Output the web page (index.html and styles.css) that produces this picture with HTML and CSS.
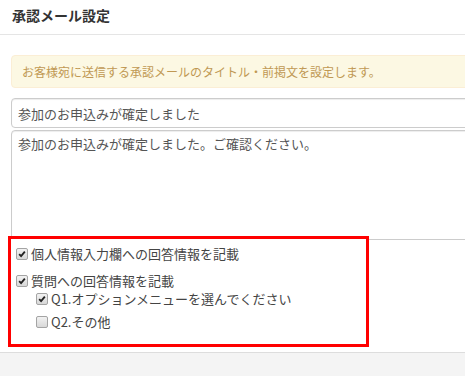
FILE: index.html
```html
<!DOCTYPE html>
<html lang="ja">
<head>
  <meta charset="UTF-8">
  <title>承認メール設定</title>
  <link rel="stylesheet" href="styles.css">
</head>
<body>
  <header class="modal-header">
    <h3>承認メール設定</h3>
  </header>

  <div class="modal-body">
    <div class="alert">お客様宛に送信する承認メールのタイトル・前掲文を設定します。</div>

    <input class="mail-title" type="text" value="参加のお申込みが確定しました">
    <textarea class="mail-body">参加のお申込みが確定しました。ご確認ください。</textarea>

    <div class="options">
      <label class="check-row first">
        <span class="check on"><svg viewBox="0 0 12 12"><path d="M2.6 6.2 L4.9 8.6 L9.4 3.2"/></svg></span>
        個人情報入力欄への回答情報を記載
      </label>
      <label class="check-row second">
        <span class="check on"><svg viewBox="0 0 12 12"><path d="M2.6 6.2 L4.9 8.6 L9.4 3.2"/></svg></span>
        質問への回答情報を記載
      </label>
      <div class="questions">
        <label class="check-row">
          <span class="check on"><svg viewBox="0 0 12 12"><path d="M2.6 6.2 L4.9 8.6 L9.4 3.2"/></svg></span>
          Q1.オプションメニューを選んでください
        </label>
        <label class="check-row">
          <span class="check"></span>
          Q2.その他
        </label>
      </div>
    </div>
  </div>

  <footer class="modal-footer"></footer>
</body>
</html>
```
FILE: styles.css
```css
html, body {
  overflow: hidden;
}
body {
  margin: 0;
  padding: 0;
  width: 465px;
  height: 376px;
  background-color: #fff;
  font-family: "Noto Sans CJK JP", "Liberation Sans", sans-serif;
  color: #333;
}
.modal-header {
  height: 34px;
  padding: 0 12px;
  border-bottom: 1px solid #e5e5e5;
}
.modal-header h3 {
  margin: 0;
  font-size: 14px;
  line-height: 30px;
  font-weight: bold;
  color: #333;
}
.modal-body {
  width: 560px;
  padding: 20px 0 0 11px;
  height: 297px;
}
.alert {
  padding: 7px 10px 6px;
  font-size: 12px;
  line-height: 18px;
  color: #c09853;
  background-color: #fcf8e3;
  border: 1px solid #fbeed5;
  border-radius: 4px;
}
.mail-title,
.mail-body {
  display: block;
  box-sizing: border-box;
  width: 100%;
  margin: 0;
  font-family: inherit;
  font-size: 13px;
  color: #555;
  border: 1px solid #ccc;
  border-radius: 4px;
  box-shadow: inset 0 1px 1px rgba(0, 0, 0, 0.075);
  background-color: #fff;
  outline: none;
}
.mail-title {
  margin-top: 10px;
  height: 30px;
  padding: 0 6px;
}
.mail-body {
  margin-top: 2px;
  height: 110px;
  padding: 4px 6px;
  line-height: 18px;
  resize: none;
}
.options {
  position: relative;
  width: 355px;
  margin: -4px 0 0 -3px;
  padding: 6px 0 13px;
  border: 3px solid #f00;
  background-color: #fff;
  font-size: 13px;
  line-height: 18px;
  color: #444;
}
.check-row {
  display: flex;
  align-items: center;
  padding-left: 5px;
}
.check-row.second {
  margin-top: 9px;
}
.questions {
  padding-left: 20px;
}
.questions .check-row + .check-row {
  margin-top: 5px;
}
.check {
  box-sizing: border-box;
  width: 12px;
  height: 12px;
  margin-right: 3px;
  border: 1px solid #a4a4a4;
  border-radius: 2px;
  background: linear-gradient(#f2f2f2, #d8d8d8);
}
.check svg {
  display: block;
  width: 10px;
  height: 10px;
}
.check path {
  fill: none;
  stroke: #222;
  stroke-width: 2.2;
}
.modal-footer {
  border-top: 1px solid #ddd;
  background-color: #f4f4f4;
  height: 40px;
}
```
